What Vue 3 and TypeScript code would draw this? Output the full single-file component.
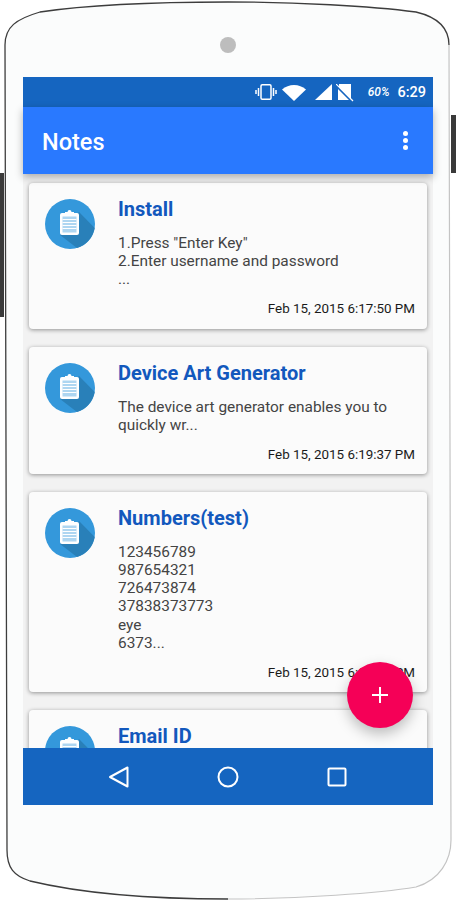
<script setup lang="ts">
interface Note { title: string; lines: string[]; date: string; height: number }
const notes: Note[] = [
  { title: 'Install', lines: ['1.Press "Enter Key"', '2.Enter username and password', '...'], date: 'Feb 15, 2015 6:17:50 PM', height: 146 },
  { title: 'Device Art Generator', lines: ['The device art generator enables you to', 'quickly wr...'], date: 'Feb 15, 2015 6:19:37 PM', height: 127 },
  { title: 'Numbers(test)', lines: ['123456789', '987654321', '726473874', '37838373773', 'eye', '6373...'], date: 'Feb 15, 2015 6:20:12 PM', height: 200 },
  { title: 'Email ID', lines: [], date: '', height: 120 },
]
</script>

<template>
  <div class="device">
    <svg class="shell" width="456" height="900" viewBox="0 0 456 900">
      <rect x="0" y="173" width="4" height="144" fill="#3a3a3a" />
      <rect x="451" y="115" width="5" height="58" fill="#3a3a3a" />
      <path class="body" d="M5 45C5 27 16 19 40 12C80 6 150 2 228 2C296 2 370 6 416 12C437 17 449 27 449 45L451 840C451 860 440 880 416 887C380 893 300 899 228 899C150 899 80 893 30 881C14 876 7 868 7 850Z" />
      <path class="edge-dark" d="M7 850L5 45C5 27 16 19 40 12C80 6 150 2 228 2C296 2 370 6 416 12C437 17 449 27 449 45" />
      <path class="edge-dark" d="M7 850C7 868 14 876 30 881C80 893 150 899 228 899" />
      <path class="edge-soft" d="M449 45L451 840C451 860 440 880 416 887C380 893 300 899 228 899" />
      <circle cx="228" cy="45" r="8" fill="#bdbdbd" />
    </svg>
    <div class="screen">
      <div class="status">
        <svg width="22" height="16" viewBox="0 0 22 16" class="s-ic">
          <rect x="6" y="0.800" width="10" height="14.400" rx="1.200" fill="none" stroke="#fff" stroke-width="1.500" />
          <path d="M3.500 4v8M1 6v4M18.500 4v8M21 6v4" stroke="#fff" stroke-width="1.500" fill="none" />
        </svg>
        <svg width="24" height="16" viewBox="0 0 24 16" class="s-wifi">
          <path d="M0 4.500C3.500 1.500 7.500 0 12 0s8.500 1.500 12 4.500L12 16Z" fill="#fff" />
        </svg>
        <svg width="17" height="16" viewBox="0 0 17 16" class="s-signal">
          <path d="M0 16 17 0V16Z" fill="#fff" />
        </svg>
        <svg width="18" height="18" viewBox="0 0 18 18" class="s-sim">
          <path d="M3 0H15V15L3 3Z M2 5 13 16H2Z" fill="#fff" />
          <path d="M0 0 17 17" stroke="#fff" stroke-width="1.200" />
        </svg>
        <span class="battery">60%</span>
        <span class="time">6:29</span>
      </div>
      <header class="appbar">
        <span class="brand">Notes</span>
        <div class="dots"><i></i><i></i><i></i></div>
      </header>
      <main class="list">
        <article v-for="n in notes" :key="n.title" class="card" :style="{ height: n.height + 'px' }">
          <svg class="avatar" width="50" height="50" viewBox="0 0 50 50">
            <circle cx="25" cy="25" r="25" fill="#3498db" />
            <path d="M34 13 49.700 29A25 25 0 0 1 32 49L15 36Z" fill="#2980b9" />
            <rect x="15" y="14" width="19" height="22" rx="2" fill="#fff" />
            <rect x="17.500" y="17.500" width="14" height="16" fill="#aed6f1" />
            <path d="M17.500 20.500h14M17.500 23.500h14M17.500 26.500h14M17.500 29.500h14" stroke="#fff" stroke-width="1" />
            <path d="M20 15h9v-2h-2.500a2 2 0 0 0-4 0H20Z" fill="#fff" />
          </svg>
          <div class="body-col">
            <h2 class="title">{{ n.title }}</h2>
            <div class="text">
              <div v-for="(l, i) in n.lines" :key="i">{{ l }}</div>
            </div>
            <div v-if="n.date" class="date">{{ n.date }}</div>
          </div>
        </article>
        <button class="fab" aria-label="Add">
          <svg width="18" height="18" viewBox="0 0 18 18"><path d="M9 1v16M1 9h16" stroke="#fff" stroke-width="2" /></svg>
        </button>
      </main>
      <nav class="navbar">
        <svg width="22" height="24" viewBox="0 0 22 24"><path d="M2 12 19.500 2.500V21.500Z" fill="none" stroke="#fff" stroke-width="2" stroke-linejoin="round" /></svg>
        <svg width="22" height="22" viewBox="0 0 22 22"><circle cx="11" cy="11" r="9.500" fill="none" stroke="#fff" stroke-width="2" /></svg>
        <svg width="20" height="20" viewBox="0 0 20 20"><rect x="1.500" y="1.500" width="17" height="17" rx="1" fill="none" stroke="#fff" stroke-width="2" /></svg>
      </nav>
    </div>
  </div>
</template>

<style>
html, body { margin: 0; background: #fff; }
</style>

<style scoped>
.device {
  position: relative;
  width: 456px;
  height: 900px;
  padding: 77px 23px 95px;
  box-sizing: border-box;
  overflow: hidden;
  font-family: Roboto, "Liberation Sans", sans-serif;
}
.shell { position: absolute; left: 0; top: 0; }
.body { fill: #fbfcfc; }
.edge-dark { fill: none; stroke: #3d3d3d; stroke-width: 1.300; }
.edge-soft { fill: none; stroke: #c4c4c4; stroke-width: 1.200; }
.screen {
  position: relative;
  height: 728px;
  display: flex;
  flex-direction: column;
  background: #f2f2f2;
}
.status {
  height: 30px;
  background: #1565c0;
  display: flex;
  align-items: center;
  justify-content: flex-end;
  padding-right: 7px;
  color: #fff;
  flex: none;
}
.s-ic { margin-right: 5px; }
.s-wifi { margin-right: 9px; margin-top: 1px; }
.s-signal { margin-right: 4px; margin-top: -1px; }
.s-sim { margin-right: 14px; margin-top: 1px; }
.battery { font-size: 12px; font-style: italic; font-weight: 500; margin-right: 8px; }
.time { font-size: 14.500px; font-weight: 500; }
.appbar {
  height: 67px;
  flex: none;
  background: #2979ff;
  display: flex;
  align-items: center;
  justify-content: space-between;
  padding: 0 25px 0 19px;
  box-shadow: 0 3px 8px rgba(0, 0, 0, 0.3);
  position: relative;
  z-index: 2;
}
.brand { color: #fff; font-size: 23.500px; font-weight: 500; padding-top: 2px; }
.dots { display: flex; flex-direction: column; gap: 2px; }
.dots i { width: 5px; height: 5px; border-radius: 50%; background: #fff; display: block; }
.list {
  position: relative;
  flex: 1;
  min-height: 0;
  overflow: hidden;
  padding: 9px 6px 0;
  display: flex;
  flex-direction: column;
  gap: 18px;
}
.card {
  flex: none;
  box-sizing: border-box;
  background: #fbfbfb;
  border-radius: 4px;
  box-shadow: 0 1px 4px rgba(0, 0, 0, 0.4);
  padding: 16px 12px 0 16px;
  display: flex;
  gap: 23px;
}
.avatar { flex: none; }
.body-col { flex: 1; min-width: 0; display: flex; flex-direction: column; }
.title { margin: 0; font-size: 20px; font-weight: 700; line-height: 20px; color: #1258bd; }
.text { margin-top: 14.500px; font-size: 15.400px; line-height: 18.250px; color: #444; }
.date { margin-top: 11.500px; text-align: right; font-size: 13.400px; line-height: 18px; color: #1a1a1a; }
.fab {
  position: absolute;
  left: 324px;
  top: 488px;
  width: 66px;
  height: 66px;
  border: 0;
  padding: 0;
  border-radius: 50%;
  background: #f50057;
  box-shadow: 0 6px 14px rgba(0, 0, 0, 0.25);
  display: flex;
  align-items: center;
  justify-content: center;
}
.navbar {
  height: 57px;
  flex: none;
  background: #1565c0;
  position: relative;
  z-index: 2;
  display: grid;
  grid-template-columns: 1fr 1fr 1fr;
  justify-items: center;
  align-items: center;
  padding: 0 41px;
}
</style>
